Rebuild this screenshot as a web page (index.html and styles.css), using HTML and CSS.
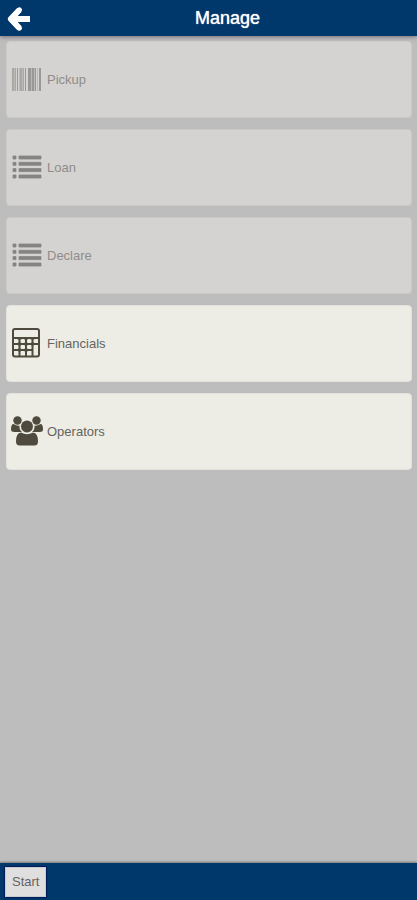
FILE: index.html
```html
<!DOCTYPE html>
<html lang="en">
<head>
<meta charset="utf-8">
<meta name="viewport" content="width=device-width, initial-scale=1">
<title>Manage</title>
<link rel="stylesheet" href="styles.css">
</head>
<body>
<header class="header">
  <button class="back" type="button" aria-label="Back">
    <svg width="24" height="26" viewBox="0 0 24 26" aria-hidden="true"><path d="M12.500 3.800 3.800 13l8.700 9.200M4.500 13H23" fill="none" stroke="currentColor" stroke-width="5.800" stroke-linejoin="round"/><path d="M12.500 3.800 3.800 13l8.700 9.200" fill="none" stroke="currentColor" stroke-width="5" stroke-linecap="round" stroke-linejoin="round"/></svg>
  </button>
  <h1 class="title">Manage</h1>
</header>
<main class="menu">
  <button class="card" type="button" disabled>
    <svg class="icon" viewBox="0 0 32 32" aria-hidden="true">
      <path d="M1 4h2v23H1zM4 4h1v23H4zM9 4h2v23H9zM12 4h1v23h-1z" fill="#aaa8a5"/>
      <path d="M6 4h1v23H6zM14 4h1v23h-1zM17 4h3v23h-3zM21 4h2v23h-2zM24 4h1v23h-1zM28 4h2v23h-2z" fill="#9a9896"/>
      <path d="M3 4h1v23H3zM8 4h1v23H8zM11 4h1v23h-1zM20 4h1v23h-1zM23 4h1v23h-1zM26 4h1v23h-1z" fill="#bbb9b7"/>
    </svg>
    <span>Pickup</span>
  </button>
  <button class="card" type="button" disabled>
    <svg class="icon" viewBox="0 0 32 32" aria-hidden="true"><path d="M2 4h3v3H2zM8 4h22v3H8zM2 10.300h3v3H2zM8 10.300h22v3H8zM2 16.600h3v3H2zM8 16.600h22v3H8zM2 23h3v3H2zM8 23h22v3H8z" fill="currentColor" stroke="currentColor" stroke-width=".8" stroke-linejoin="round"/></svg>
    <span>Loan</span>
  </button>
  <button class="card" type="button" disabled>
    <svg class="icon" viewBox="0 0 32 32" aria-hidden="true"><path d="M2 4h3v3H2zM8 4h22v3H8zM2 10.300h3v3H2zM8 10.300h22v3H8zM2 16.600h3v3H2zM8 16.600h22v3H8zM2 23h3v3H2zM8 23h22v3H8z" fill="currentColor" stroke="currentColor" stroke-width=".8" stroke-linejoin="round"/></svg>
    <span>Declare</span>
  </button>
  <button class="card" type="button">
    <svg class="icon" viewBox="0 0 32 32" aria-hidden="true">
      <rect x="2" y="1" width="26" height="27.500" rx="2" fill="none" stroke="currentColor" stroke-width="2"/>
      <path d="M2 10h26M2 16h19.500M2 22h19.500M8.500 10v18M15 10v18M21.500 10v18M21.500 16H28" fill="none" stroke="currentColor" stroke-width="2"/>
      <path d="M6.500 9.500h4v2h-4zM13 9.500h4v2h-4zM19.500 9.500h4v2h-4zM7 14.500h3v3H7zM13.500 14.500h3v3h-3zM20 14.500h3v3h-3zM7 20.500h3v3H7zM13.500 20.500h3v3h-3z" fill="currentColor"/>
    </svg>
    <span>Financials</span>
  </button>
  <button class="card" type="button">
    <svg class="icon" viewBox="0 0 32 32" aria-hidden="true">
      <g fill="currentColor">
        <circle cx="6.500" cy="4.500" r="4.200"/><circle cx="25.500" cy="4.500" r="4.200"/><circle cx="16" cy="10.500" r="6"/>
        <path d="M8.500 9.500q-.5 4 2.500 6.500H3.500Q0 16 0 13.500q0-5.500 2.500-5.500 4 2.500 6 1.500zM23.500 9.500q.5 4-2.500 6.500h7.500q3.500 0 3.500-2.500Q32 8 29.500 8q-4 2.500-6 1.500zM10 16.500q6 3.500 12 0 5 .5 5 9 0 4-3.500 4h-15Q5 29.500 5 25.500q0-8.500 5-9z"/>
      </g>
    </svg>
    <span>Operators</span>
  </button>
</main>
<footer class="footer"><button class="start" type="button">Start</button></footer>
</body>
</html>
```
FILE: styles.css
```css
* {
  box-sizing: border-box;
}

body {
  display: flex;
  flex-direction: column;
  min-height: 100vh;
  margin: 0;
  background: #bdbdbd;
  color: #64635f;
  font: 13px/18px "Liberation Sans", Arial, sans-serif;
}

button {
  font: inherit;
  color: inherit;
}

.header {
  display: grid;
  grid-template-columns: 36px 1fr;
  align-items: center;
  height: 36px;
  padding-left: 2px;
  background: #01386c;
  box-shadow: 0 1px 4px #6e6e78;
  color: #fff;
}

.back {
  display: flex;
  padding: 2px 5px 0;
  border: 0;
  background: none;
}

.title {
  margin: 0;
  font-size: 18px;
  font-weight: 400;
  line-height: 36px;
  text-align: center;
  text-shadow: 0 0 1px #fff;
}

.menu {
  display: flex;
  flex: 1;
  flex-direction: column;
  gap: 11px;
  padding: 5px 5px 12px 6px;
}

.card {
  display: flex;
  align-items: center;
  gap: 4px;
  min-height: 77px;
  padding: 0 4px;
  border: 1px solid #e2e2dc;
  border-radius: 4px;
  background: #edede5;
  text-align: left;
}

.card:disabled {
  border-color: #cbcac8;
  background: #d5d3d1;
  color: #8e8c8a;
}

.icon {
  flex: none;
  width: 32px;
  height: 32px;
  color: #4e4a3d;
}

.card:disabled .icon {
  color: #868482;
}

.footer {
  display: flex;
  align-items: center;
  height: 37px;
  padding: 0 5px;
  background: #01386c;
  box-shadow: 0 -1px 2px #77777f;
}

.start {
  height: 30px;
  padding: 0 6px;
  border: 1px solid #c9cbd2;
  background: #dfdfdf;
  box-shadow: 0 0 1px 1px #00205c;
}
```
